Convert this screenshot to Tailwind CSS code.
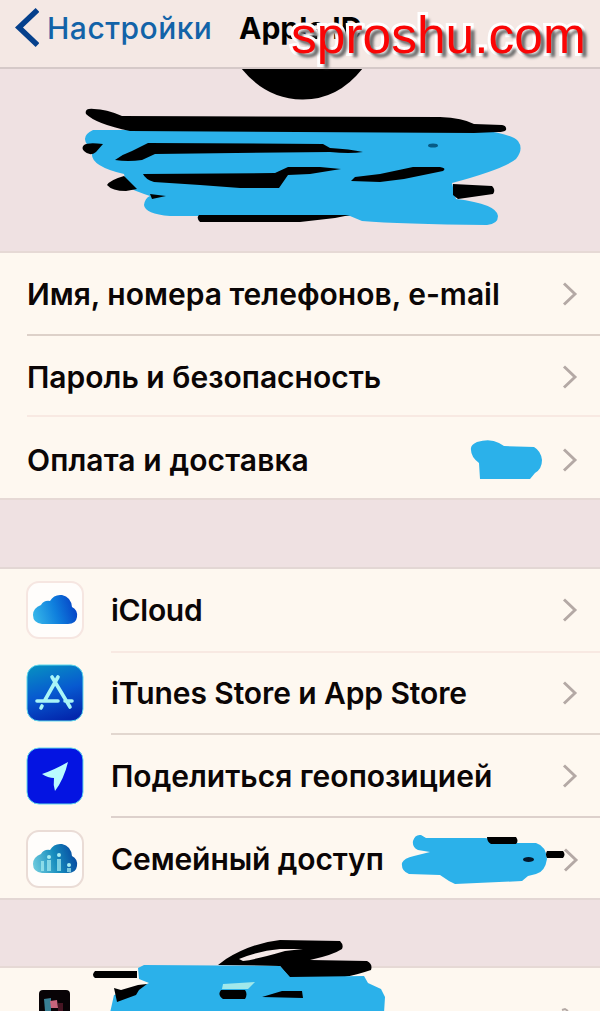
<!DOCTYPE html>
<html lang="ru">
<head>
  <meta charset="UTF-8">
  <meta name="viewport" content="width=device-width, initial-scale=1.0">
  <title>Apple ID</title>
  <script src="https://cdn.jsdelivr.net/npm/@tailwindcss/browser@4"></script>
</head>

<body class="bg-[#efe1e2]">
  <div class="relative w-[600px] h-[1011px] overflow-hidden bg-[#efe1e2] font-['Inter','Liberation_Sans',sans-serif] text-[30px] leading-none font-semibold text-[#0b0606] whitespace-nowrap">

    <!-- nav bar -->
    <header class="relative flex items-center h-[69px] pb-[12px] pl-[15px] bg-[#f4e8e4] border-b-2 border-[#d5c9c8]">
      <svg class="w-6 h-[39px] shrink-0" viewBox="0 0 24 39" fill="none" stroke="#05408c" stroke-width="5.500"><path d="M22.500 2 4 19.500 22.500 37"/></svg>
      <span class="ml-2 w-[192px] font-medium text-[#1263a8] tracking-[0.5px]">Настройки</span>
      <span class="font-bold text-black">Apple ID</span>
      <span class="absolute left-[291px] top-[10px] text-[51.500px] font-normal font-['Liberation_Sans',sans-serif] text-[#fa0505] [-webkit-text-stroke:6px_white] [paint-order:stroke_fill] [text-shadow:4px_4px_3px_#666]">sproshu.com</span>
    </header>

    <!-- avatar and name -->
    <section class="h-[182px]">
      <svg class="w-[600px] h-[182px]" viewBox="0 69 600 182">
        <path d="M241 68Q266 99 302 99.500T363 68Z" fill="#000"/>
        <g fill="#2bb1ea">
          <path d="M93 130 480 130Q512 134 518 141Q524 149 516 159Q504 169 452 183L456 199Q497 204 498 216Q498 224 487 225Q400 224 362 221L350 216 170 216Q145 214 144 205Q145 198 150 196Q135 191 127 187L124 174Q90 166 92 153L88 146Q80 136 93 130Z"/>
        </g>
        <g fill="#000">
          <path d="M86 114Q84 108 94 109Q106 109 122 116L440 117Q463 118 474 124L502 125Q507 126 506 130Q504 132 498 132L474 133 130 131Q96 124 86 114Z"/>
          <path d="M84 145Q88 142 103 144L96 152Q90 157 84 151Q81 148 84 145Z"/>
          <path d="M115 160Q123 154 132 151L148 143 323 144 330 148Q350 149 363 152Q350 154 330 152L155 154 142 160Q128 162 115 160Z"/>
          <path d="M107 185Q110 180 124 176L137 189 126 191Q112 191 107 185Z"/>
          <path d="M143 174 275 173 288 167 320 167 341 169 310 174 288 175 279 188 240 188 200 185 154 182Q145 179 143 174Z"/>
          <path d="M351 181 355 177 380 174 413 167 440 167Q447 168 443 171L404 179 380 182Z"/>
          <path d="M453 184 492 186Q496 190 493 194L458 199 453 195Z"/>
          <path d="M150 194 166 196 152 199Z"/>
          <path d="M199 215 350 215 335 218 300 222 200 222Q196 218 199 215Z"/>
          <ellipse cx="433" cy="145.500" rx="5" ry="2" fill="#075b86"/>
        </g>
      </svg>
    </section>

    <!-- account rows -->
    <section class="h-[249px] pl-[27px] bg-[#fef8f0] border-y-2 border-[#e6d9d5]">
      <div class="flex items-center h-[83px] pr-[22px] border-b-2 border-[#ddd1c9]">
        <span class="w-[535px]">Имя, номера телефонов, e-mail</span>
        <svg class="w-4 h-6 shrink-0" viewBox="0 0 16 24" fill="none" stroke="#b4a9a5" stroke-width="2.900"><path d="M2 1.500 13 12 2 22.500"/></svg>
      </div>
      <div class="flex items-center h-[81px] pt-0.5 pr-[22px] border-b-2 border-[#f8e9e2]">
        <span class="w-[535px]">Пароль и безопасность</span>
        <svg class="w-4 h-6 shrink-0" viewBox="0 0 16 24" fill="none" stroke="#b4a9a5" stroke-width="2.900"><path d="M2 1.500 13 12 2 22.500"/></svg>
      </div>
      <div class="flex items-center h-[81px] pt-1 pr-[22px]">
        <span class="w-[443px] tracking-[0.1px]">Оплата и доставка</span>
        <svg class="w-[74px] h-10 mr-[18px] shrink-0" viewBox="470 439 74 40"><path d="M471 449Q470 444 477 441Q490 437 499 442L504 445 534 446Q541 450 542 459Q542 468 535 472L530 478 480 478 479 462Q471 456 471 449Z" fill="#2bb1ea"/></svg>
        <svg class="w-4 h-6 shrink-0" viewBox="0 0 16 24" fill="none" stroke="#b4a9a5" stroke-width="2.900"><path d="M2 1.500 13 12 2 22.500"/></svg>
      </div>
    </section>

    <!-- service rows -->
    <section class="h-[333px] mt-[67px] pl-[26px] bg-[#fef8f0] border-y-2 border-[#e3d7d4]">
      <div class="flex items-center h-[82px]">
        <svg class="w-[58px] h-[58px] shrink-0" viewBox="0 0 58 58">
          <defs><linearGradient id="cloud" x1="0" y1=".6" x2="1" y2=".4"><stop stop-color="#35b4e9"/><stop offset=".5" stop-color="#0f7fdd"/><stop offset="1" stop-color="#0540c5"/></linearGradient></defs>
          <rect x="1" y="1" width="56" height="56" rx="12" fill="#fffdfb" stroke="#f6e6e1" stroke-width="2"/>
          <path d="M16 43Q7 42 7 34Q7 27 15 24Q18 19 24 20Q28 13 36 14Q45 16 46 26Q52 29 51 36Q50 43 42 43Z" fill="url(#cloud)"/>
        </svg>
        <div class="flex items-center h-[85px] pt-0.5 ml-[27px] pr-[22px] border-b-2 border-[#f8e9e2]">
          <span class="w-[451px] tracking-[-0.3px]">iCloud</span>
          <svg class="w-4 h-6 shrink-0" viewBox="0 0 16 24" fill="none" stroke="#b4a9a5" stroke-width="2.900"><path d="M2 1.500 13 12 2 22.500"/></svg>
        </div>
      </div>
      <div class="flex items-center h-[83px]">
        <svg class="w-[58px] h-[58px] shrink-0" viewBox="0 0 58 58">
          <defs><linearGradient id="store" x1=".3" y1="0" x2=".6" y2="1"><stop stop-color="#078bc3"/><stop offset=".5" stop-color="#0759d0"/><stop offset="1" stop-color="#0327ad"/></linearGradient></defs>
          <rect x="1" y="1" width="56" height="56" rx="12" fill="url(#store)" stroke="#5ed8ec" stroke-width="1"/>
          <g fill="none" stroke="#a9f5f7" stroke-width="3.600" stroke-linecap="round"><path d="M26 13 44 43M32 13 19 36M11 37H32M39 37H46M16 42 15 44"/></g>
        </svg>
        <div class="flex items-center h-[84px] pt-0.5 ml-[27px] pr-[22px] border-b-2 border-[#e2d7cf]">
          <span class="w-[451px] tracking-[-0.1px]">iTunes Store и App Store</span>
          <svg class="w-4 h-6 shrink-0" viewBox="0 0 16 24" fill="none" stroke="#b4a9a5" stroke-width="2.900"><path d="M2 1.500 13 12 2 22.500"/></svg>
        </div>
      </div>
      <div class="flex items-center h-[83px]">
        <svg class="w-[58px] h-[58px] shrink-0" viewBox="0 0 58 58">
          <rect x="1" y="1" width="56" height="56" rx="12" fill="#0414e2" stroke="#5ed8ec" stroke-width="1"/>
          <path d="M42 15Q38 32 29 44Q27 38 28 31Q22 31 16 27Q28 23 42 15Z" fill="#b9fbff"/>
        </svg>
        <div class="flex items-center h-[85px] pt-0.5 ml-[27px] pr-[22px] border-b-2 border-[#ddd1cc]">
          <span class="w-[451px]">Поделиться геопозицией</span>
          <svg class="w-4 h-6 shrink-0" viewBox="0 0 16 24" fill="none" stroke="#b4a9a5" stroke-width="2.900"><path d="M2 1.500 13 12 2 22.500"/></svg>
        </div>
      </div>
      <div class="flex items-center h-[81px] pt-[3px]">
        <svg class="w-[58px] h-[58px] shrink-0" viewBox="0 0 58 58">
          <defs><linearGradient id="family" x1="0" y1=".6" x2="1" y2=".4"><stop stop-color="#6ac8dc"/><stop offset=".5" stop-color="#168cbd"/><stop offset="1" stop-color="#06479f"/></linearGradient></defs>
          <rect x="1" y="1" width="56" height="56" rx="12" fill="#fffdfb" stroke="#eadcd6" stroke-width="2"/>
          <path d="M16 43Q7 42 7 34Q7 27 15 24Q18 19 24 20Q28 13 36 14Q45 16 46 26Q52 29 51 36Q50 43 42 43Z" fill="url(#family)"/>
          <g fill="#a8eef2"><circle cx="23" cy="27" r="2"/><circle cx="33" cy="25" r="2"/><circle cx="43" cy="35" r="2"/><path d="M21 30H25V41H21ZM31 29H35V41H31ZM15 31H18V41H15ZM41 38H45V42H41Z" opacity=".7"/></g>
        </svg>
        <div class="flex items-center ml-[27px]">
          <span class="w-[289px] tracking-[-0.1px]">Семейный доступ</span>
          <svg class="w-[180px] h-[52px] shrink-0" viewBox="400 832 180 52">
            <path d="M565 848.500 576 859 565 869.500" fill="none" stroke="#b4a9a5" stroke-width="2.900"/>
            <path d="M413 840Q415 833 421 834L426 837 485 837 518 842 536 842Q546 845 547 858Q545 871 536 873L528 875 522 880 455 883 449 880 440 874 409 873Q401 870 402 862Q404 857 414 855L430 851 418 849Q412 846 413 840Z" fill="#2bb1ea"/>
            <path d="M487 836H516Q519 840 516 843H491Q487 841 487 836ZM547 850H563Q566 853.500 563 857H547Q545 853.500 547 850Z"/>
            <ellipse cx="528.500" cy="858.500" rx="5.500" ry="2.500" fill="#03182c"/>
          </svg>
        </div>
      </div>
    </section>

    <!-- devices -->
    <section class="relative h-[60px] mt-[66px] bg-[#fef8f0] border-t-2 border-[#e6d9d5]">
      <svg class="absolute left-0 -top-[38px] w-[600px] h-[81px]" viewBox="0 930 600 81">
        <rect x="39" y="990" width="31" height="40" rx="4" fill="#080306"/>
        <path d="M44 999 51 998 51 1011H45Z" fill="#397f94"/><path d="M50 1001 57 1000 58 1008 51 1008Z" fill="#c9657c"/><path d="M58 1003H63V1011H58Z" fill="#471523"/>
        <path d="M218 965 226 959Q252 943 280 940L340 941Q344 945 342 949Q333 955 310 960L367 961Q373 964 371 970Q356 975 345 977L290 978 280 966Z"/>
        <path d="M239 959Q258 951 280 949L303 949 285 951Q258 959 243 961Z" fill="#f5e9e8"/>
        <path d="M138 968 144 965 280 966 290 977 364 976 368 983 381 989 385 997 384 1013H110L114 995 138 988 149 983 139 979Z" fill="#2bb1ea"/>
        <path d="M95 971H137V978H95Q91 975 95 971ZM114 988 121 990 138 985 147 984 139 990 136 995 117 1002Z"/>
        <path d="M223 984 255 982 248 989 222 989Z" fill="#a1e8ea"/>
        <path d="M221 990H245Q248 994 245 999H223Q217 995 221 990ZM262 997 282 991 302 991 303 998Z"/>
        <path d="M562 1010 565 1009 568 1011" fill="none" stroke="#b4a9a5" stroke-width="2"/>
      </svg>
    </section>

  </div>
</body>
</html>
